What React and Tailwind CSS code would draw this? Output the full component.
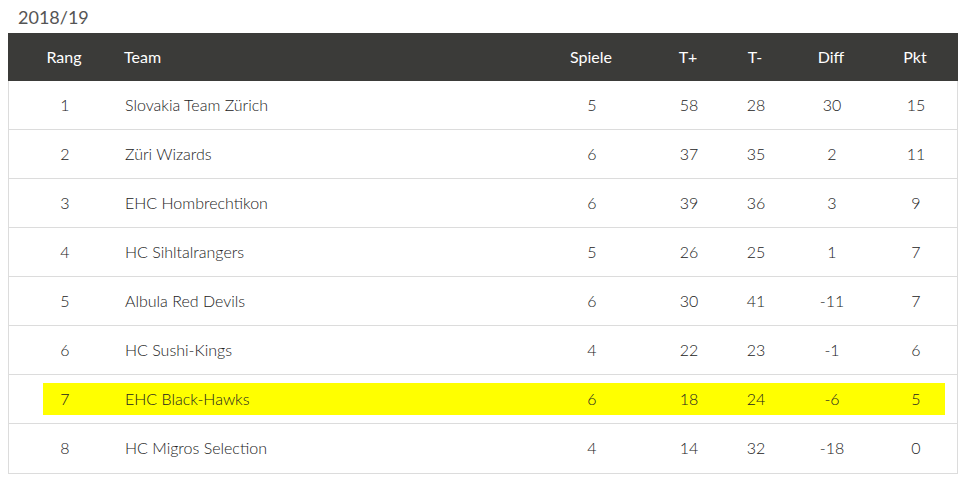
import React from 'react';

const rows = [
	[1, 'Slovakia Team Zürich', 5, 58, 28, 30, 15],
	[2, 'Züri Wizards', 6, 37, 35, 2, 11],
	[3, 'EHC Hombrechtikon', 6, 39, 36, 3, 9],
	[4, 'HC Sihltalrangers', 5, 26, 25, 1, 7],
	[5, 'Albula Red Devils', 6, 30, 41, -11, 7],
	[6, 'HC Sushi-Kings', 4, 22, 23, -1, 6],
	[7, 'EHC Black-Hawks', 6, 18, 24, -6, 5],
	[8, 'HC Migros Selection', 4, 14, 32, -18, 0],
];

const grid = "grid grid-cols-[44px_461px_88px_106px_28px_124px_44px_1fr] items-center ml-[34px] mr-[12px] h-[32px] whitespace-nowrap";

function Cells({ cells }) {
	return (
		<>
			<div className="text-center">{ cells[0] }</div>
			<div className="pl-[38px]">{ cells[1] }</div>
			{ cells.slice(2).map((c, i) => <div key={ i } className="text-center">{ c }</div>) }
			<div />
		</>
	);
}

export default function App() {
	return (
		<div className="w-[966px] h-[483px] bg-white text-[16px] font-light" style={{ fontFamily: 'Lato, "Open Sans", sans-serif' }}>
			<div className="h-[33px] pl-[18px] pt-[6px] text-[18px] leading-[22px] text-[#555] font-normal">2018/19</div>
			<div className="ml-[8px] w-[950px] border-x border-b border-[#dcdcdc]">
				<div className="bg-[#3b3b39] text-white font-normal h-[48px] py-[8px] -mx-px">
					<div className={ grid }>
						<Cells cells={ ['Rang', 'Team', 'Spiele', 'T+', 'T-', 'Diff', 'Pkt'] } />
					</div>
				</div>
				{ rows.map((r, i) => (
					<div key={ i } className={ "h-[49px] py-[8px] text-[#222] " + (i < rows.length - 1 ? "border-b border-[#dcdcdc]" : "h-[48px]") }>
						<div className={ grid + (r[0] === 7 ? " bg-[#ffff00]" : "") }>
							<Cells cells={ r } />
						</div>
					</div>
				)) }
			</div>
		</div>
	);
}
